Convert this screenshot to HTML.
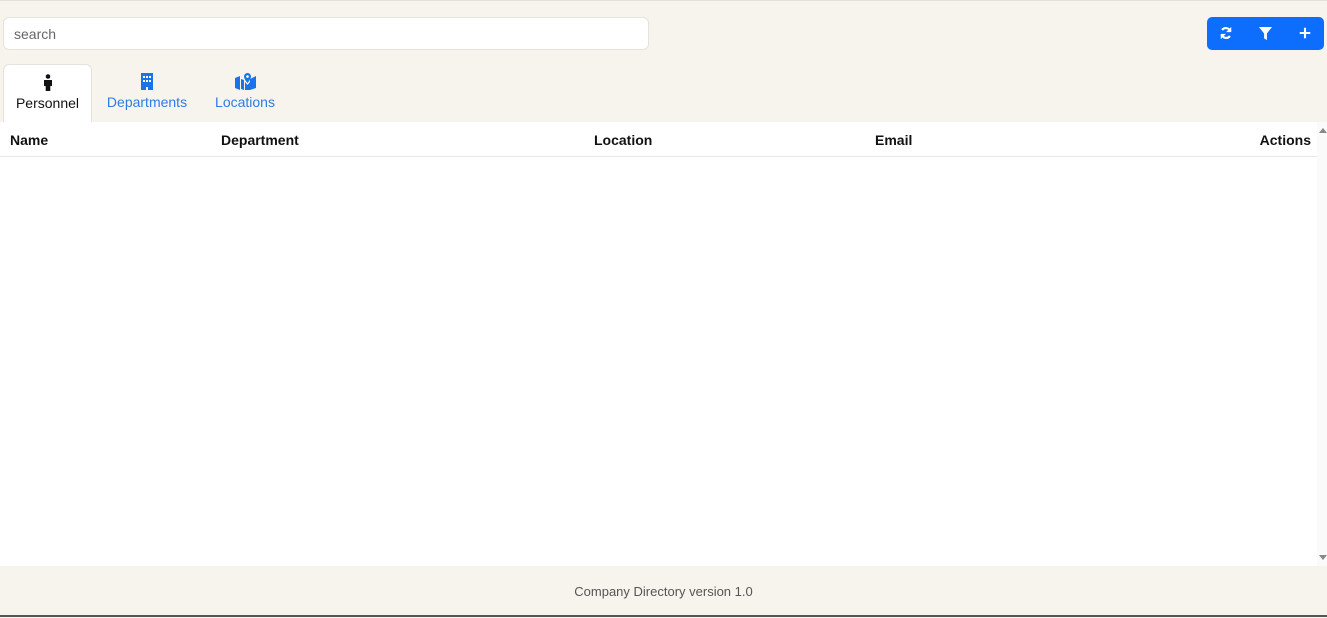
<!DOCTYPE html><html><head><style>
body{margin:0;width:1327px;height:617px;background:#f7f4ee;font-family:"Liberation Sans",sans-serif;position:relative;overflow:hidden}
.tl{position:absolute;left:0;top:0;width:1327px;height:1px;background:#e4e0da}
.search{position:absolute;left:3px;top:17px;width:646px;height:33px;background:#fff;border:1px solid #e6e2dc;border-radius:6px;font-size:14px;color:#666;line-height:33px;padding-left:10px;box-sizing:border-box}
.btns{position:absolute;left:1207px;top:17px;width:117px;height:33px;background:#0d6efd;border-radius:5px}
.btns svg{position:absolute;top:9px}
.tab{position:absolute;top:64px;height:58px;font-size:14px;text-align:center;color:#2f7be6}
.tab.act{background:#fff;border:1px solid #e6e2dc;border-bottom:none;border-radius:6px 6px 0 0;color:#111;box-sizing:border-box}
.tab svg{display:block;margin:9px auto 4px}
.table{position:absolute;left:0;top:122px;width:1317px;height:444px;background:#fff}
.th{position:absolute;top:10px;font-weight:bold;font-size:14px;color:#111}
.hr{position:absolute;left:0;top:34px;width:1317px;height:1px;background:#e8e8e8}
.sb{position:absolute;left:1317px;top:122px;width:10px;height:444px;background:#fafafa}
.foot{position:absolute;left:0;top:566px;width:1327px;height:49px;line-height:52px;text-align:center;font-size:13px;color:#555}
.bl{position:absolute;left:0;top:615px;width:1327px;height:2px;background:#555}
</style></head><body>
<div class="tl"></div>
<div class="search">search</div>
<div class="btns">
<svg style="left:12px" width="14" height="14" viewBox="0 0 16 16"><path d="M13 6A5.5 5.5 0 0 0 3.5 4.5M3 10a5.5 5.5 0 0 0 9.5 1.5" stroke="#fff" stroke-width="2.4" fill="none"/><path d="M14 1v6H8zM2 15V9h6z" fill="#fff"/></svg>
<svg style="left:51px" width="15" height="15" viewBox="0 0 16 16"><path d="M1 1h14L9.5 8v7l-3-2V8z" fill="#fff"/></svg>
<svg style="left:91px" width="14" height="14" viewBox="0 0 16 16"><path d="M8 2v12M2 8h12" stroke="#fff" stroke-width="2.4"/></svg>
</div>
<div class="tab act" style="left:3px;width:89px"><svg width="12" height="17" viewBox="0 0 12 17"><circle cx="6" cy="2.5" r="2.3" fill="#111"/><path d="M2 6h8v6H8.3v5H3.7v-5H2z" fill="#111"/></svg>Personnel</div>
<div class="tab" style="left:104px;width:86px"><svg width="14" height="17" viewBox="0 0 14 17"><path d="M1 0h12v17H8v-3H6v3H1z" fill="#1a73e8"/><g fill="#fff"><rect x="3" y="3" width="2" height="2"/><rect x="6" y="3" width="2" height="2"/><rect x="9" y="3" width="2" height="2"/><rect x="3" y="7" width="2" height="2"/><rect x="6" y="7" width="2" height="2"/><rect x="9" y="7" width="2" height="2"/></g></svg>Departments</div>
<div class="tab" style="left:212px;width:66px"><svg width="21" height="17" viewBox="0 0 21 17"><path d="M0 5l5-2v14l-5 -2zM15 6l6-3v12l-6 2zM6 6l3 1v10l-3-1z" fill="#1a73e8"/><path d="M12.5 0a3.5 3.5 0 0 1 3.5 3.5c0 2.5-3.5 6.5-3.5 6.5S9 6 9 3.5A3.5 3.5 0 0 1 12.5 0z" fill="#1a73e8"/><circle cx="12.5" cy="3.5" r="1.3" fill="#fff"/><path d="M10 9l2.5 3 2.5-3v8l-5 0z" fill="#1a73e8"/></svg>Locations</div>
<div class="table">
<div class="th" style="left:10px">Name</div>
<div class="th" style="left:221px">Department</div>
<div class="th" style="left:594px">Location</div>
<div class="th" style="left:875px">Email</div>
<div class="th" style="right:6px">Actions</div>
<div class="hr"></div>
</div>
<div class="sb"><div style="position:absolute;left:2px;top:6px;border:4px solid transparent;border-bottom:5px solid #888;border-top:0"></div><div style="position:absolute;left:2px;bottom:6px;border:4px solid transparent;border-top:5px solid #888;border-bottom:0"></div></div>
<div class="foot">Company Directory version 1.0</div>
<div class="bl"></div>
</body></html>
